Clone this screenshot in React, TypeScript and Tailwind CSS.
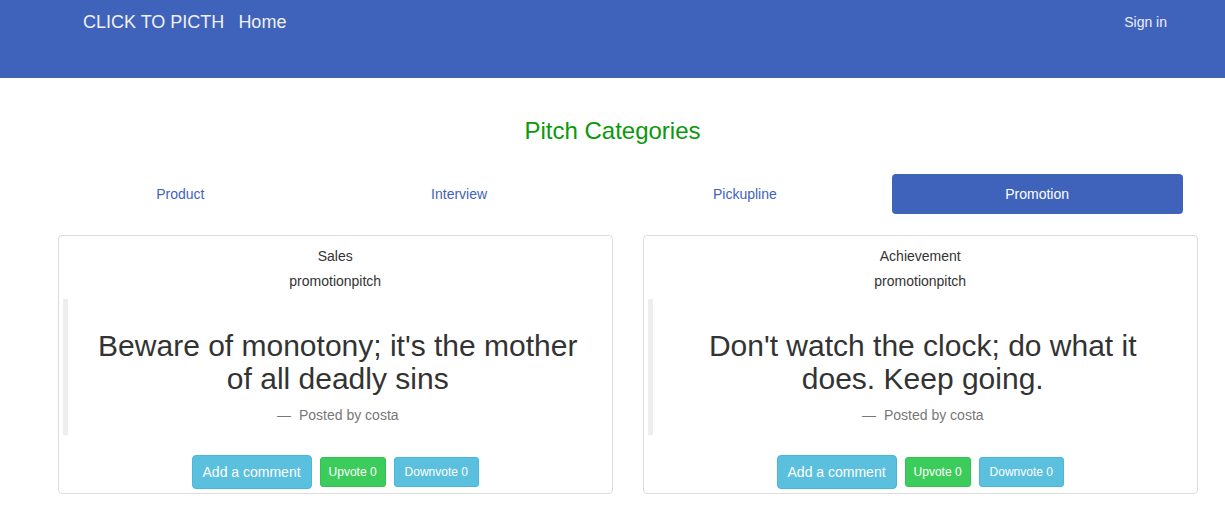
import React from "react";

const cards = [
  { title: "Sales", quote: "Beware of monotony; it's the mother of all deadly sins" },
  { title: "Achievement", quote: "Don't watch the clock; do what it does. Keep going." },
];

export default function App() {
  return (
    <div className="min-h-[511px] bg-white text-[14px] leading-[20px] text-[#333]" style={{ fontFamily: '"Liberation Sans", Arial, sans-serif' }}>
      <nav className="h-[78px] bg-[#3f63bb] flex items-start">
        <div className="pl-[83px] pt-[12px] flex items-center text-[18px] leading-[20px] text-[#f0f0f0]">
          <span>CLICK TO PICTH</span>
          <span className="ml-[14px]">Home</span>
        </div>
        <div className="ml-auto mr-[58px] pt-[12px] text-[14px] leading-[20px] text-[#eef]">Sign in</div>
      </nav>

      <div className="w-[1170px] mx-auto px-[15px]">
        <h3 className="mt-[40px] mb-[10px] text-center text-[24px] leading-[26px] text-[#0c990c]">Pitch Categories</h3>
        <div className="mt-[30px] grid grid-cols-[276fr_278fr_290fr_291fr] gap-[2px]">
          <div className="h-[40px] flex items-center justify-center text-[#3f63bb]">Product</div>
          <div className="h-[40px] flex items-center justify-center text-[#3f63bb]">Interview</div>
          <div className="h-[40px] flex items-center justify-center text-[#3f63bb]">Pickupline</div>
          <div className="h-[40px] flex items-center justify-center rounded-[4px] bg-[#3f63bb] text-white">Promotion</div>
        </div>

        <div className="-mx-[15px] mt-[21px] grid grid-cols-2">
          {cards.map((c) => (
            <div key={c.title} className="pl-[30.5px]">
              <div className="border border-[#dddddd] rounded-[4px] pt-[10px] pb-[4px] px-[4px] text-center">
                <div>{c.title}</div>
                <div className="mt-[5px]">promotionpitch</div>
                <blockquote className="mt-[8px] border-l-[5px] border-[#eeeeee] px-[20px] py-[10px]">
                  <h2 className="mt-[20px] mb-[10px] text-[30px] leading-[33px] text-[#333]">{c.quote}</h2>
                  <div className="text-[14px] leading-[20px] text-[#777]">
                    <span className="mr-[8px]">—</span>Posted by costa
                  </div>
                </blockquote>
                <div className="mt-[20px] flex items-center justify-center gap-[8px]">
                  <button className="h-[34px] px-[10px] rounded-[4px] border border-[#46b8da] bg-[#5bc0de] text-white text-[14px]">Add a comment</button>
                  <button className="h-[30px] px-[8px] rounded-[3px] border border-[#35c055] bg-[#3ccc5c] text-white text-[12px]">Upvote 0</button>
                  <button className="h-[30px] px-[10px] rounded-[3px] border border-[#46b8da] bg-[#5bc0de] text-white text-[12px]">Downvote 0</button>
                </div>
              </div>
            </div>
          ))}
        </div>
      </div>
    </div>
  );
}
